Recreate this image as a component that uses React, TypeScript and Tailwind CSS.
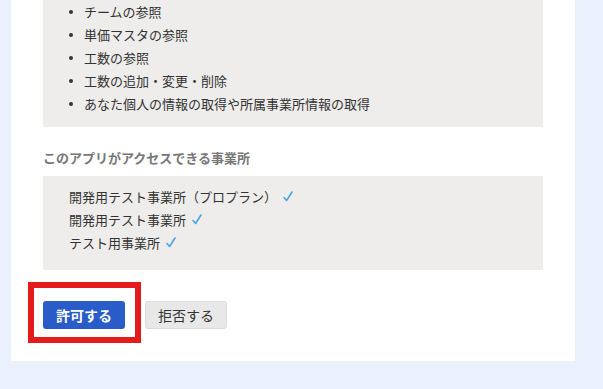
import React from "react";

const perms = [
  "チームの参照",
  "単価マスタの参照",
  "工数の参照",
  "工数の追加・変更・削除",
  "あなた個人の情報の取得や所属事業所情報の取得",
];

const offices = ["開発用テスト事業所（プロプラン）", "開発用テスト事業所", "テスト用事業所"];

function Check() {
  return (
    <svg width="10" height="11" viewBox="0 0 10 11" className="ml-[6px]">
      <path d="M1 6.5 L3.6 9.5 L9 1" fill="none" stroke="#4aa6e0" strokeWidth="1.6" strokeLinecap="round" strokeLinejoin="round" />
    </svg>
  );
}

export default function App() {
  return (
    <div
      className="w-[603px] h-[389px] overflow-hidden bg-[#eaf1fc] pl-[11px] pr-[28px] text-[#333]"
      style={{ fontFamily: '"Noto Sans CJK JP", "Noto Sans", sans-serif' }}
    >
      <div className="bg-white px-8 pb-8">
        <div className="bg-[#eeedeb] pb-[12px]">
          <ul className="pl-[26px]">
            {perms.map((p) => (
              <li key={p} className="flex items-center h-[23px] text-[13px]">
                <span className="w-[4px] h-[4px] rounded-full bg-[#333] mr-[11px]" />
                <span>{p}</span>
              </li>
            ))}
          </ul>
        </div>
        <div className="pt-[21px] pb-[8px] h-[49px] text-[13px] leading-[20px] font-bold text-[#777]">
          このアプリがアクセスできる事業所
        </div>
        <div className="bg-[#eeedeb] pl-[26px] pt-[9px] pb-[16px]">
          {offices.map((o) => (
            <div key={o} className="flex items-center h-[23px] text-[13px]">
              <span>{o}</span>
              <Check />
            </div>
          ))}
        </div>
        <div className="flex gap-[20px] pt-[31px]">
          <div className="relative">
            <button className="w-[82px] h-[28px] rounded-[3px] bg-[#2a5cc9] text-white text-[14px] font-bold">
              許可する
            </button>
            <div className="absolute left-[-15px] top-[-19px] w-[113px] h-[61px] border-[6px] border-[#e31b1b]" />
          </div>
          <button className="w-[82px] h-[28px] rounded-[3px] bg-[#e8e8e8] border border-[#dcdcdc] text-[#333] text-[14px]">
            拒否する
          </button>
        </div>
      </div>
    </div>
  );
}
